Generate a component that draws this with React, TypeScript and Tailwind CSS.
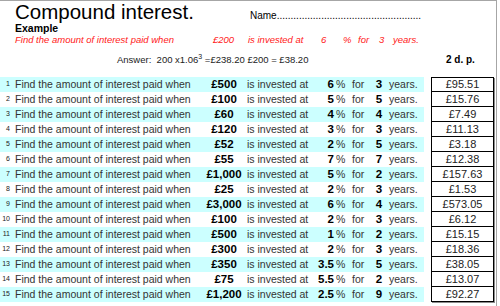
import React from 'react';

const rows = [
  { amt: '£500', rate: '6', yrs: '3', ans: '£95.51' },
  { amt: '£100', rate: '5', yrs: '5', ans: '£15.76' },
  { amt: '£60', rate: '4', yrs: '4', ans: '£7.49' },
  { amt: '£120', rate: '3', yrs: '3', ans: '£11.13' },
  { amt: '£52', rate: '2', yrs: '5', ans: '£3.18' },
  { amt: '£55', rate: '7', yrs: '7', ans: '£12.38' },
  { amt: '£1,000', rate: '5', yrs: '2', ans: '£157.63' },
  { amt: '£25', rate: '2', yrs: '3', ans: '£1.53' },
  { amt: '£3,000', rate: '6', yrs: '4', ans: '£573.05' },
  { amt: '£100', rate: '2', yrs: '3', ans: '£6.12' },
  { amt: '£500', rate: '1', yrs: '2', ans: '£15.15' },
  { amt: '£300', rate: '2', yrs: '3', ans: '£18.36' },
  { amt: '£350', rate: '3.5', yrs: '5', ans: '£38.05' },
  { amt: '£75', rate: '5.5', yrs: '2', ans: '£13.07' },
  { amt: '£1,200', rate: '2.5', yrs: '9', ans: '£92.27' },
];

export default function App() {
  return (
    <div className="w-[500px] h-[306px] bg-white overflow-hidden font-['Liberation_Sans',Arial,sans-serif] whitespace-nowrap">
      <div className="w-[497px] h-[306px] border-t border-r border-[#a6a6a6]">
        {/* header */}
        <div className="flex items-baseline h-[21px]">
          <div className="pl-[15px] w-[250px] text-[20.5px] leading-[21px] text-black">Compound interest.</div>
          <div className="text-[10px] text-black">Name....................................................</div>
        </div>
        <div className="pl-[15px] h-[12px] text-[10.5px] leading-[12px] font-bold text-black">Example</div>
        <div className="flex pl-[15px] h-[12px] text-[9.5px] leading-[12px] italic text-[#ff2020]">
          <span className="w-[198px]">Find the amount of interest paid when</span>
          <span className="w-[35px]">£200</span>
          <span className="w-[73px]">is invested at</span>
          <span className="w-[22px]">6</span>
          <span className="w-[15px]">%</span>
          <span className="w-[21px]">for</span>
          <span className="w-[14px]">3</span>
          <span>years.</span>
        </div>
        <div className="flex mt-[8px] h-[12px] text-[9.5px] leading-[12px] text-[#222] overflow-hidden">
          <span className="pl-[117px] w-[446px]">
            Answer:&nbsp; 200 x1.06
            <span className="relative -top-[4px] text-[7px] leading-none">3</span> =£238.20 £200 = £38.20
          </span>
          <span className="font-bold text-[10px] text-black">2 d. p.</span>
        </div>

        {/* questions */}
        <div className="flex mt-[11px]">
          <div className="w-[424px]">
            {rows.map((r, i) => (
              <div
                key={i}
                className={`flex items-center h-[15px] text-[10.5px] text-[#333] ${i % 2 === 0 ? 'bg-[#ccffff]' : 'bg-white'}`}
              >
                <span className="w-[10px] text-right text-[7px] text-[#222]">{i + 1}</span>
                <span className="ml-[5px] w-[186px]">Find the amount of interest paid when</span>
                <span className="w-[46px] text-center font-bold text-[11.5px] text-black">{r.amt}</span>
                <span className="w-[62px]">is invested at</span>
                <span className="w-[25px] text-right font-bold text-[11.5px] text-black">{r.rate}</span>
                <span className="w-[15px] pl-[2px]">%</span>
                <span className="w-[22px] pl-[3px]">for</span>
                <span className="w-[16px] text-center font-bold text-[11.5px] text-black">{r.yrs}</span>
                <span className="pl-[2px]">years.</span>
              </div>
            ))}
          </div>
          <div className="ml-[7px] w-[63px] shadow-[1px_1px_0_#8c8c8c]">
            {rows.map((r, i) => (
              <div
                key={i}
                className={`h-[15px] flex items-center justify-center border-x border-b border-black text-[11px] text-[#222] ${i === 0 ? 'border-t' : ''}`}
              >
                {r.ans}
              </div>
            ))}
          </div>
        </div>
      </div>
    </div>
  );
}
